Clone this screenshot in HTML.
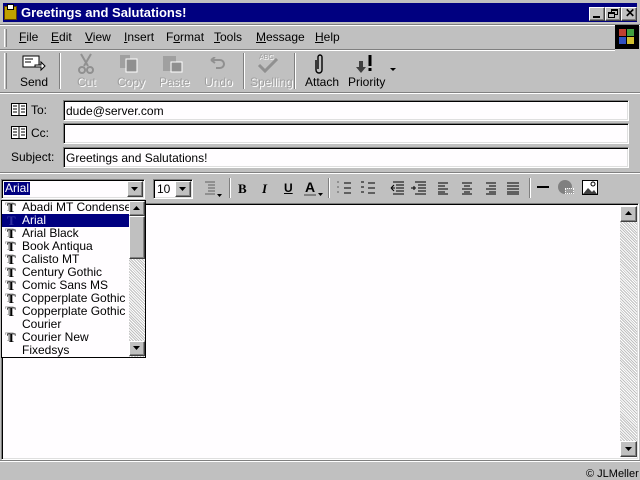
<!DOCTYPE html>
<html><head><meta charset="utf-8"><style>
*{margin:0;padding:0;box-sizing:border-box}
body{width:640px;height:480px;background:#c0c0c0;position:relative;overflow:hidden;font-family:"Liberation Sans",sans-serif;font-size:12px;color:#000}
.a{position:absolute}
.t{position:absolute;white-space:nowrap}
.sunk{border-top:1px solid #808080;border-left:1px solid #808080;border-right:1px solid #fff;border-bottom:1px solid #fff;box-shadow:inset 1px 1px 0 #000, inset -1px -1px 0 #dfdfdf;background:#fffdff}
.raise{border-top:1px solid #fff;border-left:1px solid #fff;border-right:1px solid #404040;border-bottom:1px solid #404040;background:#c0c0c0;box-shadow:inset -1px -1px 0 #808080}
.sep{position:absolute;width:2px;border-left:1px solid #808080;border-right:1px solid #fff}
.hl{position:absolute;height:2px;border-top:1px solid #808080;border-bottom:1px solid #fff}
.grip{position:absolute;width:3px;border-left:1px solid #fff;border-right:1px solid #808080}
.dis{color:#a0a0a0;text-shadow:1px 1px 0 #fff}
.u{text-decoration:underline}
.item{position:absolute;left:0;width:127px;height:13px;line-height:13px;white-space:nowrap;overflow:hidden}
.item .ic{position:absolute;left:5px;top:0;font-family:"Liberation Serif",serif;font-weight:bold;font-size:13px;color:#000;text-shadow:-2px -1px 0 #999}
.item .n{position:absolute;left:20px;top:0;white-space:nowrap}
</style></head><body>
<!-- title -->
<div class="a" style="left:3px;top:3px;width:634px;height:19px;background:#000080"></div>
<div class="a" style="left:4px;top:6px;width:13px;height:14px;background:#c0a000;border:1px solid #604000"></div>
<div class="a" style="left:7px;top:4px;width:7px;height:6px;background:#fff;border:1px solid #000"></div>
<div class="t" style="left:21px;top:5px;color:#fff;font-weight:bold;font-size:13px">Greetings and Salutations!</div>
<div class="a raise" style="left:589px;top:7px;width:16px;height:14px"></div>
<div class="a" style="left:593px;top:16px;width:7px;height:2px;background:#000"></div>
<div class="a raise" style="left:605px;top:7px;width:16px;height:14px"></div>
<div class="a" style="left:611px;top:9px;width:7px;height:6px;border:1px solid #000;border-top-width:2px"></div>
<div class="a" style="left:608px;top:12px;width:7px;height:6px;border:1px solid #000;border-top-width:2px;background:#c0c0c0"></div>
<div class="a raise" style="left:621px;top:7px;width:16px;height:14px"></div>
<div class="t" style="left:625px;top:6px;font-weight:bold;font-size:12px">✕</div>
<!-- menu -->
<div class="hl" style="left:0;top:24px;width:640px"></div>
<div class="grip" style="left:4px;top:29px;height:18px"></div>
<div class="t" style="left:19px;top:30px"><span class="u">F</span>ile</div>
<div class="t" style="left:51px;top:30px"><span class="u">E</span>dit</div>
<div class="t" style="left:85px;top:30px"><span class="u">V</span>iew</div>
<div class="t" style="left:124px;top:30px"><span class="u">I</span>nsert</div>
<div class="t" style="left:166px;top:30px">F<span class="u">o</span>rmat</div>
<div class="t" style="left:214px;top:30px"><span class="u">T</span>ools</div>
<div class="t" style="left:256px;top:30px"><span class="u">M</span>essage</div>
<div class="t" style="left:315px;top:30px"><span class="u">H</span>elp</div>
<div class="a" style="left:615px;top:25px;width:24px;height:24px;background:#000"></div>
<div class="a" style="left:619px;top:29px;width:7px;height:7px;background:#c04030"></div>
<div class="a" style="left:627px;top:29px;width:7px;height:7px;background:#40a040"></div>
<div class="a" style="left:619px;top:37px;width:7px;height:7px;background:#3050c0"></div>
<div class="a" style="left:627px;top:37px;width:7px;height:7px;background:#d0c030"></div>
<div class="hl" style="left:0;top:49px;width:615px"></div>
<!-- toolbar -->
<div class="grip" style="left:4px;top:53px;height:36px"></div>
<svg class="a" style="left:22px;top:54px" width="24" height="20"><rect x="1" y="2" width="16" height="11" fill="#fff" stroke="#000"/><path d="M3 5h8M3 8h6" stroke="#000"/><path d="M13 11h6v-3l4 4-4 4v-3h-6z" fill="#fff" stroke="#000"/></svg>
<div class="t" style="left:20px;top:75px">Send</div>
<div class="sep" style="left:59px;top:53px;height:36px"></div>
<svg class="a" style="left:76px;top:53px" width="20" height="22"><path d="M5 1l7 12M15 1l-7 12" stroke="#909090" stroke-width="2"/><circle cx="6" cy="17" r="3" fill="none" stroke="#909090" stroke-width="2"/><circle cx="14" cy="17" r="3" fill="none" stroke="#909090" stroke-width="2"/></svg>
<div class="t dis" style="left:77px;top:75px">Cut</div>
<svg class="a" style="left:119px;top:54px" width="20" height="20"><rect x="1" y="1" width="10" height="13" fill="#a0a0a0"/><rect x="7" y="5" width="11" height="13" fill="#909090" stroke="#fff"/></svg>
<div class="t dis" style="left:117px;top:75px">Copy</div>
<svg class="a" style="left:162px;top:54px" width="22" height="20"><rect x="1" y="2" width="13" height="15" fill="#a0a0a0"/><rect x="9" y="8" width="11" height="10" fill="#909090" stroke="#fff"/></svg>
<div class="t dis" style="left:159px;top:75px">Paste</div>
<svg class="a" style="left:207px;top:57px" width="20" height="14"><path d="M4 3h9a4 4 0 0 1 0 8h-4M4 3l4-3M4 3l4 3" fill="none" stroke="#909090" stroke-width="2"/></svg>
<div class="t dis" style="left:204px;top:75px">Undo</div>
<div class="sep" style="left:243px;top:53px;height:36px"></div>
<div class="t dis" style="left:259px;top:54px;font-size:7px">ABC</div>
<svg class="a" style="left:256px;top:58px" width="24" height="16"><path d="M3 7l6 6 12-12" fill="none" stroke="#909090" stroke-width="3"/></svg>
<div class="t dis" style="left:250px;top:75px">Spelling</div>
<div class="sep" style="left:294px;top:53px;height:36px"></div>
<svg class="a" style="left:313px;top:53px" width="12" height="22"><path d="M3 7v10a3 3 0 0 0 6 0V4a2 2 0 0 0-4 0v12" fill="none" stroke="#000" stroke-width="1.4"/></svg>
<div class="t" style="left:305px;top:75px">Attach</div>
<svg class="a" style="left:355px;top:53px" width="22" height="22"><path d="M4 8h4v6h3l-5 6-5-6h3z" fill="#404040"/><path d="M15 2v11" stroke="#000" stroke-width="3"/><rect x="13.5" y="15" width="3" height="3" fill="#000"/></svg>
<div class="t" style="left:348px;top:75px">Priority</div>
<svg class="a" style="left:390px;top:68px" width="6" height="4"><path d="M0 0h6l-3 3z" fill="#000"/></svg>
<div class="hl" style="left:0;top:92px;width:640px"></div>
<!-- header fields -->
<svg class="a" style="left:11px;top:103px" width="16" height="13"><rect x="0.5" y="0.5" width="15" height="12" fill="#fff" stroke="#000"/><path d="M8 0v13M2 3h4M2 6h4M2 9h4M10 3h4M10 6h4M10 9h4" stroke="#000"/></svg>
<div class="t" style="left:31px;top:103px">To:</div>
<div class="a sunk" style="left:63px;top:100px;width:566px;height:21px"></div>
<div class="t" style="left:66px;top:104px">dude@server.com</div>
<svg class="a" style="left:11px;top:126px" width="16" height="13"><rect x="0.5" y="0.5" width="15" height="12" fill="#fff" stroke="#000"/><path d="M8 0v13M2 3h4M2 6h4M2 9h4M10 3h4M10 6h4M10 9h4" stroke="#000"/></svg>
<div class="t" style="left:31px;top:126px">Cc:</div>
<div class="a sunk" style="left:63px;top:123px;width:566px;height:21px"></div>
<div class="t" style="left:11px;top:150px">Subject:</div>
<div class="a sunk" style="left:63px;top:147px;width:566px;height:21px"></div>
<div class="t" style="left:66px;top:151px">Greetings and Salutations!</div>
<div class="hl" style="left:0;top:172px;width:640px"></div>
<!-- format bar -->
<div class="a sunk" style="left:1px;top:179px;width:144px;height:20px"></div>
<div class="t" style="left:4px;top:182px;background:#000080;color:#fff;padding:0 1px;line-height:13px">Arial</div>
<div class="a raise" style="left:127px;top:181px;width:16px;height:16px"></div>
<svg class="a" style="left:131px;top:187px" width="8" height="4"><path d="M0 0h7l-3.5 4z" fill="#000"/></svg>
<div class="a sunk" style="left:153px;top:179px;width:40px;height:20px"></div>
<div class="t" style="left:157px;top:182px">10</div>
<div class="a raise" style="left:175px;top:181px;width:16px;height:16px"></div>
<svg class="a" style="left:179px;top:187px" width="8" height="4"><path d="M0 0h7l-3.5 4z" fill="#000"/></svg>
<svg class="a" style="left:204px;top:180px" width="20" height="18"><path d="M1 2h10M4 5h7M4 8h7M4 11h7M1 14h10" stroke="#606060"/><path d="M13 14h5l-2.5 3z" fill="#000"/></svg>
<div class="sep" style="left:229px;top:178px;height:20px"></div>
<div class="t" style="left:238px;top:181px;font-family:'Liberation Serif',serif;font-weight:bold;font-size:13px">B</div>
<div class="t" style="left:262px;top:181px;font-family:'Liberation Serif',serif;font-weight:bold;font-style:italic;font-size:13px">I</div>
<div class="t" style="left:284px;top:181px;font-weight:bold;font-size:12px;text-decoration:underline">U</div>
<div class="t" style="left:305px;top:179px;font-weight:bold;font-size:14px">A</div>
<div class="a" style="left:304px;top:194px;width:12px;height:2px;background:#808080"></div>
<svg class="a" style="left:318px;top:193px" width="5" height="3"><path d="M0 0h5l-2.5 3z" fill="#000"/></svg>
<div class="sep" style="left:328px;top:178px;height:20px"></div>
<svg class="a" style="left:336px;top:181px" width="220" height="14"><g stroke="#000"><path d="M8 2h7M8 7h7M8 12h7"/><path d="M1 1h2M1 6h2M1 11h2" stroke="#606060"/><path d="M32 2h7M32 7h7M32 12h7"/><path d="M25 1h3M25 6h3M25 11h3" stroke="#606060" stroke-width="2"/><path d="M57 1h11M60 4h8M60 7h8M60 10h8M57 13h11M56 7h3"/><path d="M55 7l3-3M55 7l3 3"/><path d="M79 1h11M82 4h8M82 7h8M82 10h8M79 13h11M75 7h5M78 5v4"/><path d="M102 2h10M102 5h7M102 8h10M102 11h7M102 13h10"/><path d="M126 2h10M128 5h6M126 8h10M128 11h6M126 13h10"/><path d="M150 2h10M153 5h7M150 8h10M153 11h7M150 13h10"/><path d="M171 2h12M171 5h12M171 8h12M171 11h12M171 13h12"/></g></svg>
<div class="sep" style="left:529px;top:178px;height:20px"></div>
<div class="a" style="left:537px;top:186px;width:12px;height:2px;background:#000"></div>
<div class="a" style="left:558px;top:180px;width:14px;height:14px;border-radius:50%;background:#808080"></div>
<div class="a" style="left:565px;top:188px;width:9px;height:6px;background:#a0a0a0;border:1px dotted #fff"></div>
<svg class="a" style="left:582px;top:180px" width="16" height="15"><rect x="0.5" y="0.5" width="15" height="14" fill="#fff" stroke="#000"/><path d="M1 14l5-6 4 4 2-2 3 4z" fill="#404040"/><circle cx="11" cy="4" r="2" fill="none" stroke="#000"/></svg>
<!-- editor -->
<div class="a" style="left:1px;top:203px;width:638px;height:257px;border-top:1px solid #808080;border-left:1px solid #808080;border-right:1px solid #fff;border-bottom:1px solid #fff;box-shadow:inset 1px 1px 0 #000, inset -1px -1px 0 #dfdfdf;background:#fffdff"></div>
<div class="a" style="left:620px;top:206px;width:17px;height:251px;background:#dcdcdc;background-image:repeating-linear-gradient(45deg,#c0c0c0 0 1px,#fff 1px 2px)"></div>
<div class="a raise" style="left:620px;top:206px;width:17px;height:16px"></div>
<svg class="a" style="left:625px;top:211px" width="8" height="5"><path d="M0 4h7l-3.5-4z" fill="#000"/></svg>
<div class="a raise" style="left:620px;top:441px;width:17px;height:16px"></div>
<svg class="a" style="left:625px;top:447px" width="8" height="5"><path d="M0 0h7l-3.5 4z" fill="#000"/></svg>
<!-- dropdown list -->
<div class="a" style="left:1px;top:200px;width:145px;height:158px;background:#fffdff;border:1px solid #000"></div>
<div class="a" style="left:129px;top:201px;width:16px;height:156px;background-image:repeating-linear-gradient(45deg,#c0c0c0 0 1px,#fff 1px 2px)"></div>
<div class="a raise" style="left:129px;top:201px;width:16px;height:15px"></div>
<svg class="a" style="left:133px;top:206px" width="8" height="5"><path d="M0 4h7l-3.5-4z" fill="#000"/></svg>
<div class="a raise" style="left:129px;top:216px;width:16px;height:43px"></div>
<div class="a raise" style="left:129px;top:341px;width:16px;height:15px"></div>
<svg class="a" style="left:133px;top:346px" width="8" height="5"><path d="M0 0h7l-3.5 4z" fill="#000"/></svg>
<div class="a" style="left:2px;top:201px;width:127px;height:156px;overflow:hidden">
<div class="item" style="top:0"><span class="ic">T</span><span class="n">Abadi MT Condensed</span></div>
<div class="item" style="top:13px;background:#000080;color:#fff"><span class="ic" style="color:#3030a0;text-shadow:none">T</span><span class="n">Arial</span></div>
<div class="item" style="top:26px"><span class="ic">T</span><span class="n">Arial Black</span></div>
<div class="item" style="top:39px"><span class="ic">T</span><span class="n">Book Antiqua</span></div>
<div class="item" style="top:52px"><span class="ic">T</span><span class="n">Calisto MT</span></div>
<div class="item" style="top:65px"><span class="ic">T</span><span class="n">Century Gothic</span></div>
<div class="item" style="top:78px"><span class="ic">T</span><span class="n">Comic Sans MS</span></div>
<div class="item" style="top:91px"><span class="ic">T</span><span class="n">Copperplate Gothic Bold</span></div>
<div class="item" style="top:104px"><span class="ic">T</span><span class="n">Copperplate Gothic Light</span></div>
<div class="item" style="top:117px"><span class="n">Courier</span></div>
<div class="item" style="top:130px"><span class="ic">T</span><span class="n">Courier New</span></div>
<div class="item" style="top:143px"><span class="n">Fixedsys</span></div>
</div>
<!-- status -->
<div class="hl" style="left:0;top:460px;width:640px"></div>
<div class="t" style="left:586px;top:468px;font-size:11px">© JLMeller</div>
</body></html>
